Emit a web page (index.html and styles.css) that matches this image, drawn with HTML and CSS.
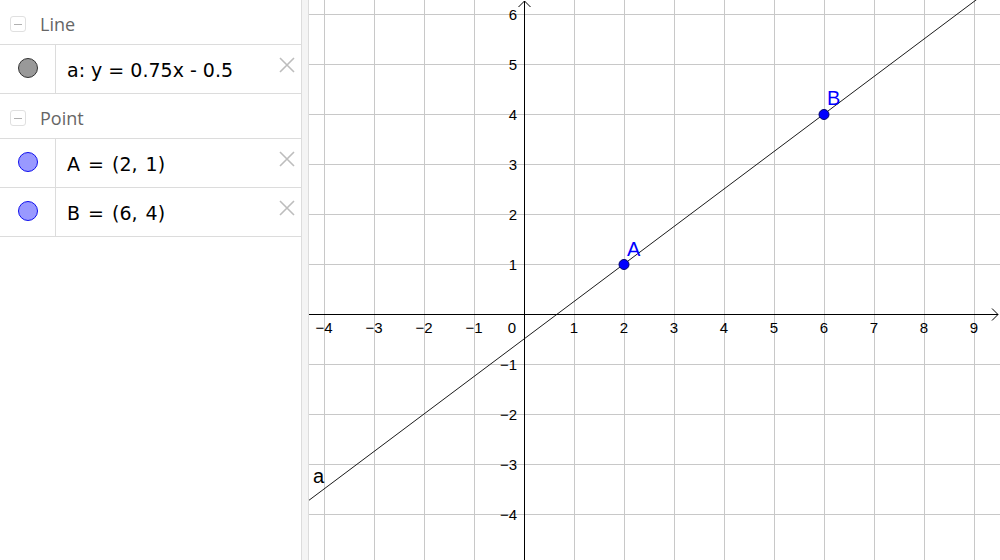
FILE: index.html
```html
<!DOCTYPE html>
<html>
<head>
<meta charset="utf-8">
<link rel="stylesheet" href="styles.css">
</head>
<body>
<div class="app">
  <div class="panel">
    <div class="group-head">
      <span class="collapse"><span class="dash"></span></span>
      <span class="group-title">Line</span>
    </div>
    <div class="item">
      <div class="marble-cell"><span class="marble marble-grey"></span></div>
      <div class="item-text">a: y = 0.75x - 0.5</div>
      <svg class="close" viewBox="0 0 16 16"><path d="M1 1L15 15M15 1L1 15"/></svg>
    </div>
    <div class="group-head">
      <span class="collapse"><span class="dash"></span></span>
      <span class="group-title">Point</span>
    </div>
    <div class="item">
      <div class="marble-cell"><span class="marble marble-blue"></span></div>
      <div class="item-text item-point">A = (2, 1)</div>
      <svg class="close" viewBox="0 0 16 16"><path d="M1 1L15 15M15 1L1 15"/></svg>
    </div>
    <div class="item">
      <div class="marble-cell"><span class="marble marble-blue"></span></div>
      <div class="item-text item-point">B = (6, 4)</div>
      <svg class="close" viewBox="0 0 16 16"><path d="M1 1L15 15M15 1L1 15"/></svg>
    </div>
  </div>
  <div class="splitter"></div>
  <div class="graphics">
    <svg class="plot" width="691" height="560" viewBox="309 0 691 560">
      <g class="grid">
        <path d="M324.5 0V560M374.5 0V560M424.5 0V560M474.5 0V560M574.5 0V560M624.5 0V560M674.5 0V560M724.5 0V560M774.5 0V560M824.5 0V560M874.5 0V560M924.5 0V560M974.5 0V560"/>
        <path d="M309 14.5H1000M309 64.5H1000M309 114.5H1000M309 164.5H1000M309 214.5H1000M309 264.5H1000M309 364.5H1000M309 414.5H1000M309 464.5H1000M309 514.5H1000"/>
      </g>
      <g class="axes">
        <path d="M309 314.5H998M524.5 1V560"/>
        <path class="arrow" d="M992 308.5L998 314.5L992 320.5M518.5 7L524.5 1L530.5 7"/>
      </g>
      <g class="xlabels">
        <text x="324" y="333">−4</text>
        <text x="374" y="333">−3</text>
        <text x="424" y="333">−2</text>
        <text x="474" y="333">−1</text>
        <text x="574" y="333">1</text>
        <text x="624" y="333">2</text>
        <text x="674" y="333">3</text>
        <text x="724" y="333">4</text>
        <text x="774" y="333">5</text>
        <text x="824" y="333">6</text>
        <text x="874" y="333">7</text>
        <text x="924" y="333">8</text>
        <text x="974" y="333">9</text>
      </g>
      <text class="origin" x="512" y="333">0</text>
      <g class="ylabels">
        <text x="517" y="19.5">6</text>
        <text x="517" y="69.5">5</text>
        <text x="517" y="119.5">4</text>
        <text x="517" y="169.5">3</text>
        <text x="517" y="219.5">2</text>
        <text x="517" y="269.5">1</text>
        <text x="517" y="369.5">−1</text>
        <text x="517" y="419.5">−2</text>
        <text x="517" y="469.5">−3</text>
        <text x="517" y="519.5">−4</text>
      </g>
      <line class="line-a" x1="309" y1="500.25" x2="1000" y2="-18"/>
      <text class="line-label" x="313" y="483">a</text>
      <circle class="pt" cx="624" cy="264.5" r="5"/>
      <circle class="pt" cx="824" cy="114.5" r="5"/>
      <text class="pt-label" x="627" y="256">A</text>
      <text class="pt-label" x="827" y="105">B</text>
    </svg>
  </div>
</div>
</body>
</html>
```
FILE: styles.css
```css
html, body {
  margin: 0;
  padding: 0;
  background: #ffffff;
}
.app {
  display: flex;
  width: 1000px;
  height: 560px;
  overflow: hidden;
}
.panel {
  width: 301px;
  flex: none;
  border-right: 1px solid #dcdcdc;
  background: #ffffff;
}
.splitter {
  width: 6px;
  flex: none;
  background: #f4f4f4;
  border-right: 1px solid #dcdcdc;
}
.graphics {
  flex: 1;
  height: 560px;
  overflow: hidden;
}
.plot {
  display: block;
}
.group-head {
  border-bottom: 1px solid #dcdcdc;
  display: flex;
  align-items: center;
  padding: 4px 0 0 10px;
  box-sizing: border-box;
  height: 45px;
}
.collapse {
  width: 14px;
  height: 14px;
  border: 1px solid #e0e0e0;
  border-radius: 3px;
  display: flex;
  align-items: center;
  justify-content: center;
  flex: none;
}
.dash {
  width: 8px;
  height: 1px;
  background: #b0b0b0;
}
.group-title {
  margin-left: 14px;
  font-family: "Open Sans", "DejaVu Sans", sans-serif;
  font-size: 18px;
  color: #666666;
}
.item {
  display: flex;
  height: 49px;
  border-bottom: 1px solid #dcdcdc;
  box-sizing: border-box;
}
.marble-cell {
  width: 56px;
  flex: none;
  border-right: 1px solid #dcdcdc;
  display: flex;
  justify-content: center;
  padding-top: 13px;
  box-sizing: border-box;
}
.marble {
  width: 18px;
  height: 18px;
  border-radius: 50%;
  display: block;
}
.marble-grey {
  background: #999999;
  border: 1px solid #333333;
}
.marble-blue {
  background: #9999ff;
  border: 1px solid #1010ee;
}
.item-text {
  flex: 1;
  padding: 14px 0 0 11px;
  font-family: "DejaVu Sans", sans-serif;
  font-size: 19px;
  color: #000000;
  white-space: nowrap;
}
.item-point {
  word-spacing: 2px;
}
.close {
  width: 16px;
  height: 16px;
  margin: 12px 6px 0 0;
  flex: none;
}
.close path {
  stroke: #bdbdbd;
  stroke-width: 1.6;
  fill: none;
}
.grid path {
  stroke: #c8c8c8;
  stroke-width: 1;
  fill: none;
  shape-rendering: crispEdges;
}
.axes path {
  stroke: #000000;
  stroke-width: 1;
  fill: none;
  shape-rendering: crispEdges;
}
.axes .arrow {
  shape-rendering: auto;
}
.xlabels text, .ylabels text, .origin {
  font-family: "Liberation Sans", Arial, sans-serif;
  font-size: 15px;
  fill: #000000;
}
.xlabels text {
  text-anchor: middle;
}
.origin {
  text-anchor: middle;
}
.ylabels text {
  text-anchor: end;
}
.line-a {
  stroke: #000000;
  stroke-width: 0.9;
}
.line-label {
  font-family: "Liberation Sans", Arial, sans-serif;
  font-size: 20px;
  fill: #000000;
}
.pt {
  fill: #0000ff;
  stroke: #00006e;
  stroke-width: 1;
}
.pt-label {
  font-family: "Liberation Sans", Arial, sans-serif;
  font-size: 20px;
  fill: #0000ff;
}
```
